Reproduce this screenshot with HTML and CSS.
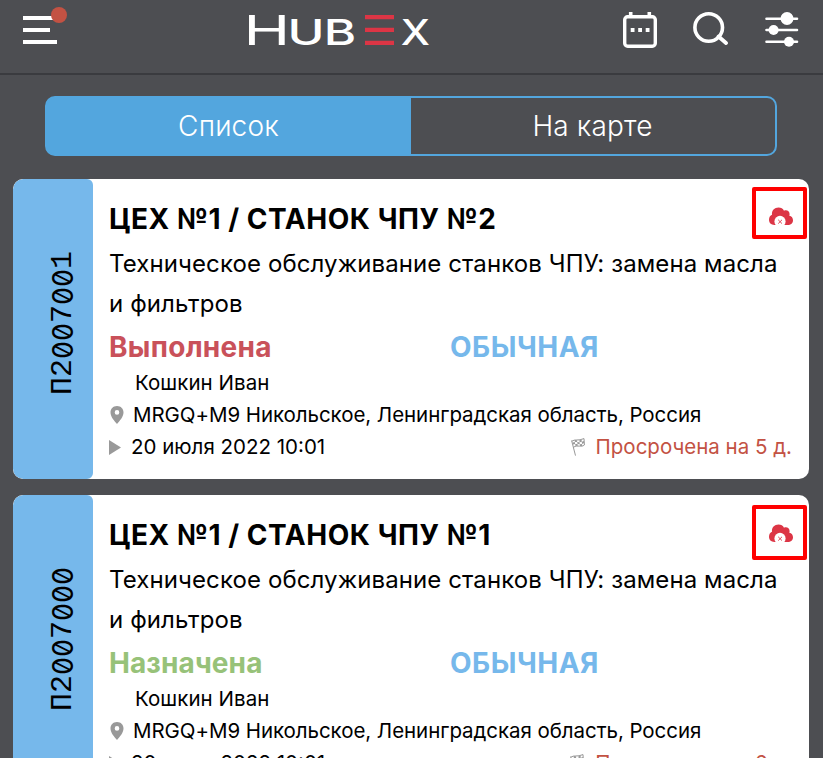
FILE: index.html
```
<!DOCTYPE html>
<html lang="ru">
<head>
<meta charset="utf-8">
<title>HubEx</title>
<link rel="stylesheet" href="styles.css">
</head>
<body>
<svg class="defs" aria-hidden="true">
  <symbol id="cloud" viewBox="0 0 24 19">
    <path fill="#dc3545" d="M5.5 18C2 18 0 15.8 0 12.800C0 10.200 1.200 8.500 3 7.800C2.500 3.500 5.500 .500 9.500 .500C12 .500 14 1.500 15 3.700C17.500 2.500 20.700 4 20.600 7C20.600 7.600 20.500 8.200 20.300 8.700C22.700 9.200 24 10.900 24 13.200C24 16 22 18 18.500 18Z"/>
    <circle cx="11" cy="14.400" r="5.600" fill="#fff"/>
    <path stroke="#dc3545" stroke-width=".9" d="M9.200 12.800l3.800 3.800M13 12.800l-3.800 3.800"/>
  </symbol>
  <symbol id="pin" viewBox="0 0 14 18">
    <path fill="#999" fill-rule="evenodd" d="M7 0C3 0 .5 2.900.5 6.400C.5 10.500 4.300 14.800 7 18C9.700 14.800 13.500 10.500 13.500 6.400C13.500 2.900 11 0 7 0ZM7 4.100a2.300 2.300 0 1 1 0 4.600a2.300 2.300 0 0 1 0-4.600Z"/>
  </symbol>
  <symbol id="play" viewBox="0 0 12 15"><path fill="#999" d="M0 0L12 7.500L0 15Z"/></symbol>
  <symbol id="flag" viewBox="0 0 14 18">
    <g fill="none" stroke="#8c8c8c" stroke-width=".9">
      <path d="M.6 2.500L4.500 17.600M.8 3.200C4 .8 7 3.200 13 .600L13.400 7C10 9.800 7 6.500 2.500 9.200"/>
    </g>
    <path fill="#9a9a9a" d="M3.600 2.100l2.300.1.300 1.900-2.300 0zM8.400 2.300l2.200-.5.200 2-2.200.4zM6.200 4.100l2.300.2.300 1.900-2.300-.2zM10.800 3.800l2.200-.8.200 2-2.200.9zM4.200 6.100l2.300-.1.300 1.700-2.300.2zM8.800 6.200l2.200-.3.200 2-2.200.1zM1.600 4.500l2.200-.5.300 2-2.100.5z"/>
  </symbol>
</svg>

<header class="topbar">
  <div class="menu"><i></i><i></i><i></i><span class="dot"></span></div>
  <div class="logo" aria-label="HubEx">
    <svg width="190" height="60" viewBox="-4 -13 190 60">
      <g fill="#fff" font-family="Inter">
        <text transform="translate(-4.500 32) scale(1.520 1)" font-size="41.300" font-weight="400">H</text>
        <text transform="translate(39.500 32) scale(1.390 1)" font-size="36" font-weight="500">U</text>
        <text transform="translate(75.700 32) scale(1.370 1)" font-size="36" font-weight="500">B</text>
        <text transform="translate(152.700 32) scale(1.160 1)" font-size="36" font-weight="500">X</text>
      </g>
      <path fill="#dc3545" d="M117 2h29v4.300h-29zM117 14.700h29v4.300h-29zM117 27.700h29v4.300h-29z"/>
    </svg>
  </div>
  <div class="tools">
    <svg width="34" height="38" viewBox="0 0 34 38" fill="none" stroke="#fff">
      <rect x="1.700" y="5.700" width="30.600" height="29.600" rx="3" stroke-width="3.400"/>
      <path stroke-width="3.600" d="M7.700 1v6M26.300 1v6"/>
      <path stroke-width="4" stroke-dasharray="3.800 3.700" d="M7.700 19h19"/>
    </svg>
    <svg width="36" height="34" viewBox="0 0 36 34" fill="none" stroke="#fff">
      <circle cx="15.700" cy="16.500" r="13.800" stroke-width="3.600"/>
      <path stroke-width="3.800" stroke-linecap="round" d="M25.500 25.500L33 32"/>
    </svg>
    <svg width="34" height="36" viewBox="0 0 34 36" fill="#fff">
      <path fill="none" stroke="#fff" stroke-width="2.600" stroke-linecap="round" d="M1.500 7.700h30.500M1.500 19h30.500M1.500 30.800h30.500"/>
      <circle cx="22" cy="7.500" r="6.500"/><circle cx="8.600" cy="19" r="5"/><circle cx="24" cy="30.800" r="5"/>
    </svg>
  </div>
</header>

<nav class="tabs"><a class="tab active">Список</a><a class="tab">На карте</a></nav>

<main class="list">
  <article class="card">
    <div class="stripe"><div class="code">П2<i>0</i><i>0</i>7<i>0</i><i>0</i>1</div></div>
    <div class="body">
      <h2>ЦЕХ №1 / СТАНОК ЧПУ №2</h2>
      <p class="desc">Техническое обслуживание станков ЧПУ: замена масла и фильтров</p>
      <div class="status"><span class="done">Выполнена</span><span class="kind">ОБЫЧНАЯ</span></div>
      <div class="row person">Кошкин Иван</div>
      <div class="row place"><svg width="14" height="18"><use href="#pin"/></svg>MRGQ+M9 Никольское, Ленинградская область, Россия</div>
      <div class="row time"><svg width="12" height="15"><use href="#play"/></svg>20 июля 2022 10:01<span class="late"><svg width="14" height="18"><use href="#flag"/></svg>Просрочена на 5 д.</span></div>
    </div>
    <div class="offline"><svg width="24" height="19"><use href="#cloud"/></svg></div>
  </article>
  <article class="card">
    <div class="stripe"><div class="code">П2<i>0</i><i>0</i>7<i>0</i><i>0</i><i>0</i></div></div>
    <div class="body">
      <h2>ЦЕХ №1 / СТАНОК ЧПУ №1</h2>
      <p class="desc">Техническое обслуживание станков ЧПУ: замена масла и фильтров</p>
      <div class="status"><span class="assigned">Назначена</span><span class="kind">ОБЫЧНАЯ</span></div>
      <div class="row person">Кошкин Иван</div>
      <div class="row place"><svg width="14" height="18"><use href="#pin"/></svg>MRGQ+M9 Никольское, Ленинградская область, Россия</div>
      <div class="row time"><svg width="12" height="15"><use href="#play"/></svg>20 июля 2022 10:01<span class="late"><svg width="14" height="18"><use href="#flag"/></svg>Просрочена на 6 д.</span></div>
    </div>
    <div class="offline second"><svg width="24" height="19"><use href="#cloud"/></svg></div>
  </article>
</main>
</body>
</html>
```
FILE: styles.css
```
* { box-sizing: border-box; }
html, body { height: 758px; overflow: hidden; }
body { margin: 0; background: #4d4e52; color: #000; font-family: Inter, "Open Sans", sans-serif; }
svg { display: block; flex: none; }
.defs { display: none; }

.topbar { position: relative; height: 75px; border-bottom: 2px solid #3a3b3f; display: flex; justify-content: space-between; padding: 0 24px 0 23px; }
.menu { position: relative; width: 45px; padding-top: 16px; display: flex; flex-direction: column; gap: 8.500px; }
.menu i { height: 3.500px; width: 34px; background: #fff; }
.menu i:nth-child(2) { width: 27px; }
.dot { position: absolute; left: 28px; top: 7px; width: 16px; height: 16px; border-radius: 50%; background: #c35243; }
.logo { position: absolute; left: 244px; top: 0; }
.tools { display: flex; align-items: flex-start; padding-top: 11px; gap: 36px; }

.tabs { display: flex; height: 60px; margin: 21px 46px 23px 45px; border: 2px solid #53a6de; border-radius: 10px; overflow: hidden; background: linear-gradient(90deg, #53a6de 50%, transparent 50%) border-box; }
.tab { flex: 1; color: #fff; font-size: 28px; font-weight: 300; line-height: 57px; text-align: center; letter-spacing: .15px; text-indent: -1px; }

.list { display: flex; flex-direction: column; gap: 16px; padding: 0 14px 0 13px; }
.card { position: relative; display: flex; height: 300px; background: #fff; border-radius: 10px; overflow: hidden; flex: none; }
.stripe { width: 80px; flex: none; background: #76b8eb; border-radius: 10px 6px 6px 10px; display: flex; align-items: center; justify-content: center; padding: 0 0 12px 20px; }
.code { writing-mode: vertical-rl; transform: rotate(180deg); font: 30px/30px "Liberation Mono", monospace; white-space: nowrap; }
.code i { display: inline-block; height: 18px; text-align: center; font: normal 28.500px/30px Inter; font-feature-settings: "zero"; }
.body { flex: 1; padding: 20px 17px 0 16px; }
h2 { margin: 0 0 5px; font-size: 28px; line-height: 40px; font-weight: 700; letter-spacing: .55px; }
.desc { margin: 0 0 3px; width: 680px; font-size: 24px; line-height: 40px; letter-spacing: .1px; }
.status { display: flex; font-size: 28px; line-height: 40px; font-weight: 700; }
.status span { width: 341px; }
.done { color: #c9515a; letter-spacing: .3px; }
.assigned { color: #97c279; letter-spacing: .1px; }
.kind { color: #76b8eb; letter-spacing: .5px; }
.row { display: flex; align-items: center; height: 32px; font-size: 20.500px; line-height: 32px; white-space: nowrap; }
.person { padding-left: 26px; letter-spacing: .05px; }
.place { gap: 9px; padding-left: 1px; letter-spacing: -.06px; }
.time { gap: 10px; }
.late { margin-left: auto; display: flex; align-items: center; gap: 11px; color: #c35243; }
.offline { position: absolute; left: 739px; top: 8px; width: 55px; height: 52px; border: 4px solid #f00; border-radius: 2px; padding: 16px 0 0 13px; }
.offline.second { top: 10px; height: 55px; padding-top: 15px; }
```
